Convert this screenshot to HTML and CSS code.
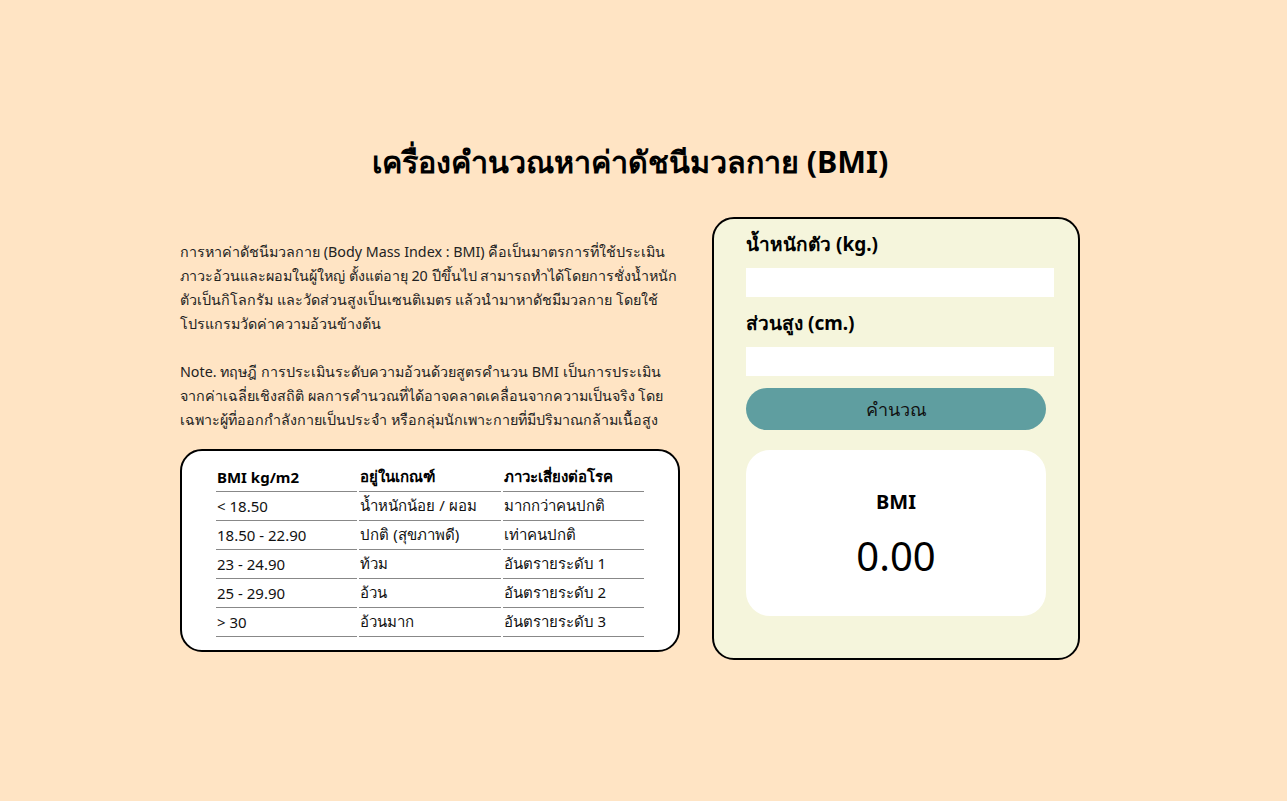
FILE: index.html
```html
<!DOCTYPE html>
<html lang="th">
<head>
<meta charset="utf-8">
<title>BMI</title>
<link rel="stylesheet" href="styles.css">
</head>
<body>
<div class="page">
  <h1 class="title">เครื่องคำนวณหาค่าดัชนีมวลกาย (BMI)</h1>
  <div class="row">
    <div class="info">
      <p class="desc">การหาค่าดัชนีมวลกาย (Body Mass Index : BMI) คือเป็นมาตรการที่ใช้ประเมิน<br>ภาวะอ้วนและผอมในผู้ใหญ่ ตั้งแต่อายุ 20 ปีขึ้นไป สามารถทำได้โดยการชั่งน้ำหนัก<br>ตัวเป็นกิโลกรัม และวัดส่วนสูงเป็นเซนติเมตร แล้วนำมาหาดัชมีมวลกาย โดยใช้<br>โปรแกรมวัดค่าความอ้วนข้างต้น</p>
      <p class="desc">Note. ทฤษฎี การประเมินระดับความอ้วนด้วยสูตรคำนวน BMI เป็นการประเมิน<br>จากค่าเฉลี่ยเชิงสถิติ ผลการคำนวณที่ได้อาจคลาดเคลื่อนจากความเป็นจริง โดย<br>เฉพาะผู้ที่ออกกำลังกายเป็นประจำ หรือกลุ่มนักเพาะกายที่มีปริมาณกล้ามเนื้อสูง</p>
      <div class="table-box">
        <table class="bmi-table">
          <thead>
            <tr><th>BMI kg/m2</th><th>อยู่ในเกณฑ์</th><th>ภาวะเสี่ยงต่อโรค</th></tr>
          </thead>
          <tbody>
            <tr><td>&lt; 18.50</td><td>น้ำหนักน้อย / ผอม</td><td>มากกว่าคนปกติ</td></tr>
            <tr><td>18.50 - 22.90</td><td>ปกติ (สุขภาพดี)</td><td>เท่าคนปกติ</td></tr>
            <tr><td>23 - 24.90</td><td>ท้วม</td><td>อันตรายระดับ 1</td></tr>
            <tr><td>25 - 29.90</td><td>อ้วน</td><td>อันตรายระดับ 2</td></tr>
            <tr><td>&gt; 30</td><td>อ้วนมาก</td><td>อันตรายระดับ 3</td></tr>
          </tbody>
        </table>
      </div>
    </div>
    <div class="card">
      <label class="label" for="weight">น้ำหนักตัว (kg.)</label>
      <input class="field" id="weight" type="text">
      <label class="label" for="height">ส่วนสูง (cm.)</label>
      <input class="field field-last" id="height" type="text">
      <button class="btn" type="button">คำนวณ</button>
      <div class="result">
        <div class="result-label">BMI</div>
        <div class="result-value">0.00</div>
      </div>
    </div>
  </div>
</div>
</body>
</html>
```

FILE: styles.css
```css
html, body {
  margin: 0;
  padding: 0;
}
body {
  background: #ffe4c4;
  font-family: "Noto Sans", sans-serif;
  color: #222;
  min-height: 100vh;
  box-sizing: border-box;
  padding-top: 1px;
  display: flex;
  flex-direction: column;
  justify-content: center;
}
.page {
  width: 900px;
  margin-left: 180px;
  display: flex;
  flex-direction: column;
}
.title {
  margin: 0 0 37px;
  text-align: center;
  font-size: 30.5px;
  font-weight: 700;
  line-height: 38px;
  color: #000;
}
.row {
  display: flex;
  align-items: flex-start;
  gap: 32px;
}
.info {
  width: 500px;
  padding-top: 23px;
  display: flex;
  flex-direction: column;
}
.desc {
  margin: 0 0 24px;
  font-size: 14.3px;
  line-height: 24px;
  white-space: nowrap;
}
.desc + .desc {
  margin-bottom: 17px;
}
.table-box {
  background: #fff;
  border: 2px solid #000;
  border-radius: 22px;
  padding: 12px 0 13px;
}
.bmi-table {
  width: 432px;
  margin: 0 auto;
  table-layout: fixed;
  border-collapse: separate;
  border-spacing: 2px 0;
  font-size: 15px;
  color: #111;
}
.bmi-table th,
.bmi-table td {
  text-align: left;
  height: 28px;
  padding: 0 1px;
  border-bottom: 1px solid #888;
  white-space: nowrap;
}
.bmi-table th {
  font-weight: 700;
  color: #000;
}
.card {
  width: 300px;
  background: #f5f5dc;
  border: 2px solid #000;
  border-radius: 22px;
  padding: 13px 32px 42px;
  display: flex;
  flex-direction: column;
}
.label {
  font-size: 19px;
  font-weight: 700;
  line-height: 25px;
  color: #000;
  margin-bottom: 11px;
}
.field {
  box-sizing: content-box;
  width: 300px;
  height: 29px;
  padding: 0 4px;
  border: 0;
  margin: 0 0 14px;
  background: #fff;
  font: inherit;
}
.field-last {
  margin-bottom: 12px;
}
.btn {
  width: 300px;
  height: 42px;
  border: 0;
  border-radius: 21px;
  background: #5f9ea0;
  font-family: inherit;
  font-size: 18px;
  color: #111;
  padding: 0;
}
.result {
  margin-top: 20px;
  height: 166px;
  box-sizing: border-box;
  padding-top: 3px;
  background: #fff;
  border-radius: 24px;
  display: flex;
  flex-direction: column;
  align-items: center;
  justify-content: center;
}
.result-label {
  font-size: 20px;
  font-weight: 700;
  color: #000;
  line-height: 26px;
}
.result-value {
  margin-top: 16px;
  font-size: 40px;
  line-height: 50px;
  color: #000;
}
```
